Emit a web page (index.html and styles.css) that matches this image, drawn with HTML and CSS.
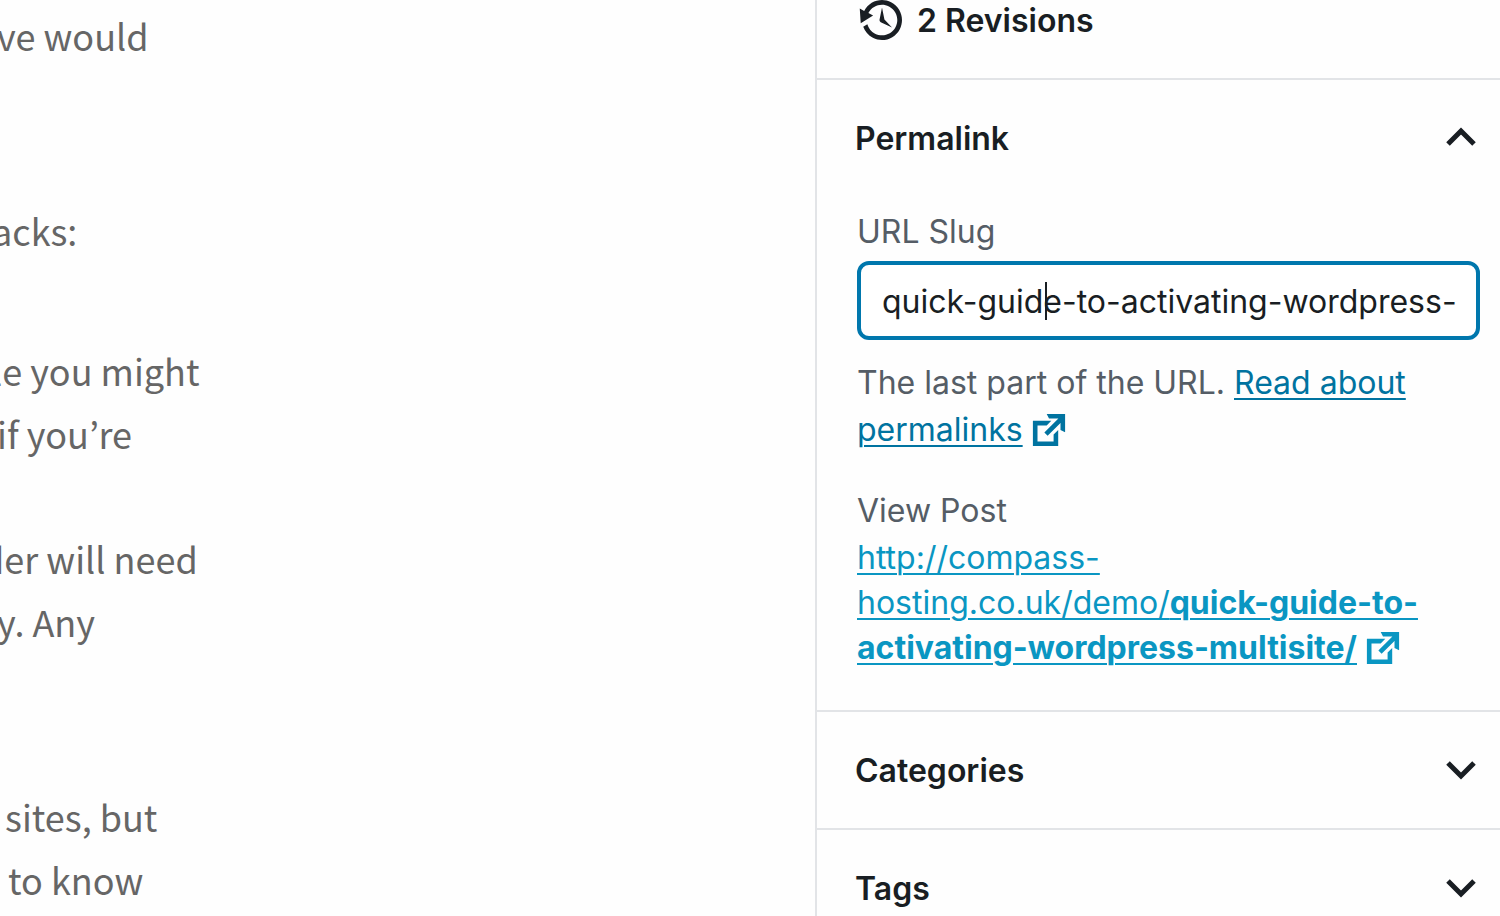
FILE: index.html
```
<!DOCTYPE html>
<html lang="en">
<head>
    <meta charset="UTF-8">
    <meta name="viewport" content="width=device-width, initial-scale=1.0">
    <title>Edit Post</title>
    <link rel="stylesheet" href="styles.css">
</head>
<body>
    <div class="layout">

        <!-- Post content -->
        <main class="editor">
            <p><span class="cut-short">ve would</span></p>
            <p class="gap-large"><span class="cut-mid">acks:</span></p>
            <p class="gap-medium"><span class="cut-mid">le you might</span><br><span class="cut-short">if you’re</span></p>
            <p class="gap-small"><span class="cut-long">der will need</span><br><span class="cut-short">y. Any</span></p>
            <p class="gap-large"><span class="cut-short"> sites, but</span><br><span> to know</span></p>
        </main>

        <!-- Settings sidebar -->
        <aside class="sidebar">
            <section class="panel">
                <button type="button" class="panel-toggle revisions">
                    <svg class="icon-backup" viewBox="0 0 20 20" aria-hidden="true"><path d="M13.65 2.88c3.93 2.01 5.48 6.84 3.47 10.77s-6.83 5.48-10.77 3.47c-1.87-.96-3.2-2.56-3.86-4.4l1.64-1.03c.45 1.57 1.52 2.95 3.08 3.76 3.01 1.54 6.69.35 8.23-2.66 1.55-3.01.36-6.69-2.65-8.24C9.78 3.01 6.1 4.2 4.56 7.21l1.88.97-4.95 3.08-.39-5.82 1.78.91C4.9 2.4 9.75.89 13.65 2.88zm-4.36 7.83C9.11 10.53 9 10.28 9 10c0-.07.03-.12.04-.19h-.01L10 5l.97 4.81L14 13l-4.5-2.12.02-.02c-.08-.04-.16-.09-.23-.15z"/></svg>
                    <span>2 Revisions</span>
                </button>
            </section>

            <section class="panel">
                <button type="button" class="panel-toggle" aria-expanded="true">
                    <span>Permalink</span>
                    <svg class="icon-arrow" viewBox="0 0 40 40" aria-hidden="true"><path d="M7 26l13-13 13 13"/></svg>
                </button>
                <div class="panel-body">
                    <label for="slug">URL Slug</label>
                    <div class="slug-field">
                        <input type="text" id="slug" value="quick-guide-to-activating-wordpress-">
                        <span class="caret"></span>
                    </div>
                    <p class="help">The last part of the URL. <a href="#">Read about permalinks</a><svg class="icon-external" viewBox="0 0 20 20" aria-hidden="true"><path d="M9 3h8v8l-2-1V6.92l-5.6 5.59-1.41-1.41L14.08 5H10zm3 12v-3l2-2v7H3V6h8L9 8H5v7h7z"/></svg></p>
                    <p class="view-label">View Post</p>
                    <p class="post-link"><a href="#">http://compass-<wbr>hosting.co.uk/demo/<b>quick-guide-to-activating-wordpress-multisite/</b></a><svg class="icon-external" viewBox="0 0 20 20" aria-hidden="true"><path d="M9 3h8v8l-2-1V6.92l-5.6 5.59-1.41-1.41L14.08 5H10zm3 12v-3l2-2v7H3V6h8L9 8H5v7h7z"/></svg></p>
                </div>
            </section>

            <section class="panel">
                <button type="button" class="panel-toggle" aria-expanded="false">
                    <span>Categories</span>
                    <svg class="icon-arrow" viewBox="0 0 40 40" aria-hidden="true"><path d="M7 13l13 13 13-13"/></svg>
                </button>
            </section>

            <section class="panel">
                <button type="button" class="panel-toggle" aria-expanded="false">
                    <span>Tags</span>
                    <svg class="icon-arrow" viewBox="0 0 40 40" aria-hidden="true"><path d="M7 13l13 13 13-13"/></svg>
                </button>
            </section>
        </aside>
    </div>
</body>
</html>
```
FILE: styles.css
```
* {
    box-sizing: border-box;
}

body {
    margin: 0;
    background-color: #fefefe;
    font-family: Inter, sans-serif;
    font-size: 32px;
    color: #191e23;
}

p {
    margin: 0;
}

.layout {
    display: flex;
    height: 100vh;
    overflow: hidden;
}

/* Post content, scrolled sideways */
.editor {
    flex: 1;
    padding-top: 4px;
    overflow: hidden;
    font-family: "Noto Sans CJK KR", sans-serif;
    font-size: 36px;
    line-height: 63px;
    color: #666;
}

.editor span {
    display: inline-block;
    white-space: pre;
}

.cut-short {
    margin-left: -3px;
}

.cut-mid {
    margin-left: -8px;
}

.cut-long {
    margin-left: -18px;
}

.gap-small {
    margin-top: 62px;
}

.gap-medium {
    margin-top: 77px;
}

.gap-large {
    margin-top: 132px;
}

/* Sidebar */
.sidebar {
    flex: 0 0 685px;
    margin-top: -38px;
    border-left: 2px solid #e2e4e7;
}

.panel {
    border-bottom: 2px solid #e2e4e7;
}

.panel-toggle {
    display: flex;
    align-items: center;
    justify-content: space-between;
    width: 100%;
    height: 116px;
    padding: 0 19px 0 38px;
    border: none;
    background: none;
    color: inherit;
    font-family: inherit;
    font-size: 32px;
    font-weight: 600;
    text-align: left;
    cursor: pointer;
}

.revisions {
    justify-content: flex-start;
    gap: 10px;
    padding-left: 40px;
}

.panel-body {
    padding: 12px 20px 40px 40px;
    color: #555d66;
}

.panel-body label {
    display: block;
    line-height: 48px;
}

.slug-field {
    position: relative;
    margin: 5px 0 19px;
}

.slug-field input {
    display: block;
    width: 100%;
    height: 79px;
    padding: 2px 16px 0 21px;
    border: 4px solid #0077ad;
    border-radius: 12px;
    outline: none;
    background-color: #fff;
    color: #191e23;
    font-family: inherit;
    font-size: 32px;
}

.caret {
    position: absolute;
    top: 21px;
    left: 188px;
    width: 2px;
    height: 38px;
    background-color: #191e23;
}

.help {
    line-height: 47px;
}

.help a {
    color: #0073a0;
}

.view-label {
    margin-top: 34px;
    line-height: 48px;
}

.post-link {
    line-height: 45px;
}

.post-link a {
    color: #0a96c2;
}

.post-link b {
    font-weight: 700;
}

a {
    text-decoration-thickness: 2px;
    text-underline-offset: 4px;
}

/* Icons */
svg {
    flex: none;
    fill: currentColor;
}

.icon-backup {
    width: 50px;
    height: 50px;
}

.icon-arrow {
    width: 40px;
    height: 40px;
    fill: none;
    stroke: currentColor;
    stroke-width: 5;
}

.icon-external {
    width: 46px;
    height: 46px;
    margin: -8px 0 -4px 3px;
    vertical-align: middle;
}

.help .icon-external {
    color: #0073a0;
}

.post-link .icon-external {
    color: #0a96c2;
}
```
